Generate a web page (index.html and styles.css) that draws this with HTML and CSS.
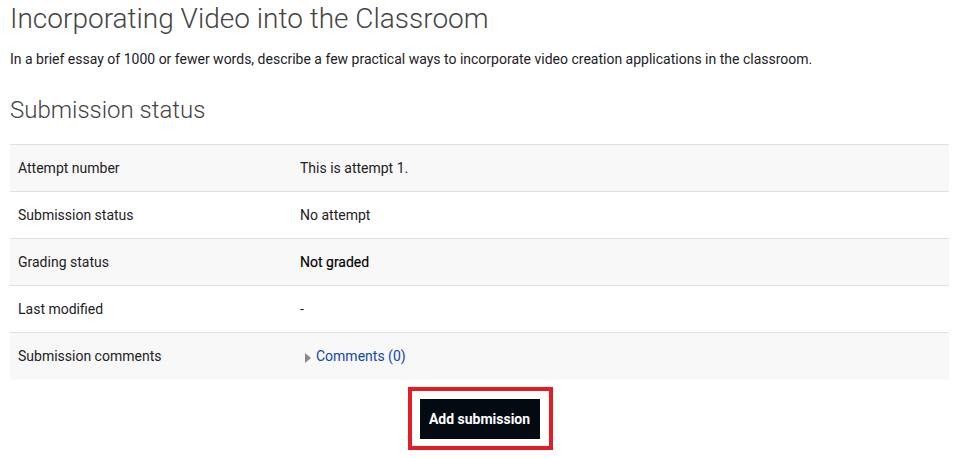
FILE: index.html
```html
<!DOCTYPE html>
<html>
<head>
<meta charset="utf-8">
<link rel="stylesheet" href="styles.css">
</head>
<body>
<div class="page">
  <h1 class="title">Incorporating Video into the Classroom</h1>
  <p class="intro">In a brief essay of 1000 or fewer words, describe a few practical ways to incorporate video creation applications in the classroom.</p>
  <h2 class="section">Submission status</h2>
  <table class="status">
    <tr class="odd"><th>Attempt number</th><td>This is attempt 1.</td></tr>
    <tr><th>Submission status</th><td>No attempt</td></tr>
    <tr class="odd"><th>Grading status</th><td class="strong">Not graded</td></tr>
    <tr><th>Last modified</th><td>-</td></tr>
    <tr class="odd"><th>Submission comments</th><td><span class="tri"></span><a class="link" href="#">Comments (0)</a></td></tr>
  </table>
  <div class="actions">
    <div class="highlight"><button class="btn">Add submission</button></div>
  </div>
</div>
</body>
</html>
```
FILE: styles.css
```css
html, body { margin: 0; padding: 0; background: #fff; }
body { font-family: Roboto, "Noto Sans", sans-serif; color: #1d2125; }
.page { padding: 0 11px 0 10px; }
.title { font-weight: 300; font-size: 28px; line-height: 36px; margin: 1px 0 0 0; color: #444; }
.intro { font-size: 14px; line-height: 20px; margin: 12px 0 0 0; }
.section { font-weight: 300; font-size: 24px; line-height: 30px; margin: 26px 0 0 0; color: #444; }
.status { width: 100%; border-collapse: collapse; margin-top: 19px; font-size: 14px; }
.status tr { height: 47px; border-top: 1px solid #dee2e6; }
.status tr.odd { background: #f8f8f8; }
.status th { text-align: left; font-weight: 400; width: 266px; padding: 0 8px; vertical-align: middle; }
.status td { padding: 0 8px; vertical-align: middle; }
.status td.strong { color: #000; font-weight: 400; -webkit-text-stroke: 0.15px #000; }
.tri { display: inline-block; width: 0; height: 0; border-top: 5.5px solid transparent; border-bottom: 5.5px solid transparent; border-left: 6px solid #8a8a8a; margin: 0 5px 0 5px; vertical-align: -2px; }
.link { color: #0f47ad; text-decoration: none; }
.actions { display: flex; justify-content: center; margin-top: 7px; padding-left: 1px; }
.highlight { border: 4px solid #e31c25; padding: 8px 9px 7px 8px; }
.btn { display: block; width: 120px; height: 40px; background: #030a12; color: #fff; border: none; font-family: Roboto, sans-serif; font-size: 14px; font-weight: 700; padding: 0; }
```
